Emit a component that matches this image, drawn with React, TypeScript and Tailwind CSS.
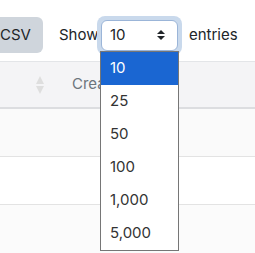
import React from "react";

export default function App() {
  const items = ["10", "25", "50", "100", "1,000", "5,000"];
  return (
    <div
      className="relative w-[255px] h-[253px] overflow-hidden bg-white text-[#212529]"
      style={{ fontFamily: "Inter, 'Noto Sans', sans-serif" }}
    >
      {/* toolbar */}
      <div className="flex items-center h-[61px] pt-[9px] ml-[-12px]">
        <div className="h-[36px] px-[12px] flex items-center rounded-[6px] bg-[#cfd5dc] text-[15px] text-[#212529]">
          CSV
        </div>
        <span className="ml-[16px] w-[38px] whitespace-nowrap text-[15px]">Show</span>
        <div className="rounded-[8px] p-[4px] bg-[#c9d9ec]">
          <div className="w-[77px] h-[31px] rounded-[6px] border border-[#9bb5d8] bg-white flex items-center justify-between pl-[8px] pr-[11px] text-[15px]">
            <span>10</span>
            <svg width="10" height="12" viewBox="0 0 10 12">
              <path d="M1 5 L5 1 L9 5 Z" fill="#212529" />
              <path d="M1 7 L5 11 L9 7 Z" fill="#212529" />
            </svg>
          </div>
        </div>
        <span className="ml-[7px] text-[15px]">entries</span>
      </div>

      {/* table */}
      <div className="border-t border-[#e3e5e8]">
        <div className="h-[47px] bg-[#f4f4f6] border-b-2 border-[#dcdde0] flex items-center">
          <div className="w-[60px] flex justify-end pr-[15px]">
            <svg width="10" height="20" viewBox="0 0 10 20">
              <path d="M1 9 L5 1 L9 9 Z" fill="#dedede" />
              <path d="M1 11 L5 19 L9 11 Z" fill="#dedede" />
            </svg>
          </div>
          <span className="ml-[12px] text-[15px] text-[#6c757d]">Created</span>
        </div>
        <div className="h-[48px] bg-[#fafafa] border-b border-[#e3e3e3]" />
        <div className="h-[48px] bg-white border-b border-[#e3e3e3]" />
        <div className="h-[48px] bg-[#fbfbfb]" />
      </div>

      {/* dropdown list */}
      <div className="absolute left-[100px] top-[51px] w-[79px] border border-[#767676] bg-white">
        {items.map((it, i) => (
          <div
            key={it}
            className={
              i === 0
                ? "h-[33px] flex items-center pl-[9px] text-[15px] bg-[#1a66d2] text-white"
                : "h-[33px] flex items-center pl-[9px] text-[15px] text-[#333]"
            }
          >
            {it}
          </div>
        ))}
      </div>
    </div>
  );
}
